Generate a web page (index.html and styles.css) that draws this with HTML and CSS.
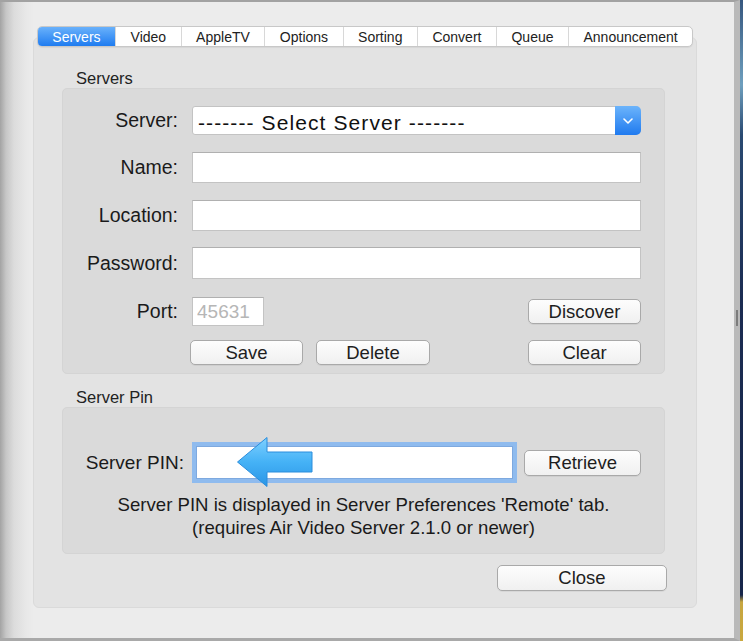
FILE: index.html
```html
<!DOCTYPE html>
<html lang="en">
<head>
  <meta charset="UTF-8" />
  <title>Air Video - Preferences</title>
  <link rel="stylesheet" href="styles.css">
</head>
<body>

  <div class="window">
    <div class="tabview">
      <div class="tabs">
        <span class="tab active">Servers</span>
        <span class="tab">Video</span>
        <span class="tab">AppleTV</span>
        <span class="tab">Options</span>
        <span class="tab">Sorting</span>
        <span class="tab">Convert</span>
        <span class="tab">Queue</span>
        <span class="tab">Announcement</span>
      </div>

      <div class="tabbox">
        <div class="section-title">Servers</div>
        <div class="group servers">
          <div class="row row-select">
            <label>Server:</label>
            <div class="select">
              <span class="select-value">------- Select Server -------</span>
              <span class="select-btn">
                <svg width="10" height="6" viewBox="0 0 10 6"><path d="M1 1 L5 5 L9 1" fill="none" stroke="#fff" stroke-width="1.6" stroke-linecap="round" stroke-linejoin="round"/></svg>
              </span>
            </div>
          </div>
          <div class="row row-name">
            <label>Name:</label>
            <input class="field" type="text">
          </div>
          <div class="row row-location">
            <label>Location:</label>
            <input class="field" type="text">
          </div>
          <div class="row row-password">
            <label>Password:</label>
            <input class="field" type="password">
          </div>
          <div class="row row-port">
            <label>Port:</label>
            <input class="field port" type="text" placeholder="45631">
            <button class="btn push-right">Discover</button>
          </div>
          <div class="row row-actions">
            <button class="btn">Save</button>
            <button class="btn delete">Delete</button>
            <button class="btn push-right">Clear</button>
          </div>
        </div>

        <div class="section-title pin-title">Server Pin</div>
        <div class="group pin">
          <div class="row row-pin">
            <label>Server PIN:</label>
            <div class="pin-field">
              <input class="field focused" type="text">
              <!-- pointer arrow over the PIN box -->
              <svg class="arrow" width="78" height="52" viewBox="0 0 78 52">
                <defs>
                  <linearGradient id="arrowFill" x1="0" y1="0" x2="0" y2="1">
                    <stop offset="0" stop-color="#7fd0ff"/>
                    <stop offset="0.5" stop-color="#45b2f6"/>
                    <stop offset="1" stop-color="#2a95e6"/>
                  </linearGradient>
                </defs>
                <path d="M1.5 26 L31 1.5 L31 16 L76 16 L76 36 L31 36 L31 50.5 Z" fill="url(#arrowFill)" stroke="#2b8ddc" stroke-width="1" stroke-linejoin="round"/>
              </svg>
            </div>
            <button class="btn retrieve">Retrieve</button>
          </div>
          <p class="hint">Server PIN is displayed in Server Preferences 'Remote' tab.<br>(requires Air Video Server 2.1.0 or newer)</p>
        </div>

        <div class="footer">
          <button class="btn close">Close</button>
        </div>
      </div>
    </div>
  </div>

</body>
</html>
```

FILE: styles.css
```css
body {
  margin: 0;
  font-family: "Liberation Sans", Arial, sans-serif;
  color: #1a1a1a;
  background: linear-gradient(to bottom, #36577f 0, #6e9fbe 85px, #2a4a72 135px, #1b2c52 300px, #17264a 595px, #c7a640 602px, #c9a83f 641px);
  height: 641px;
  overflow: hidden;
}

/* Preferences window */
.window {
  position: relative;
  width: 740px;
  height: 641px;
  box-sizing: border-box;
  padding: 24px 0 0 33px;
  border-top: 2px solid #a2a2a2;
  border-right: 6px solid #b9b9b9;
  border-bottom: 3px solid #a9a9a9;
  background: linear-gradient(to right, #a3a3a3 0, #c6c6c6 6px, #dcdcdc 14px, #e8e8e8 26px, #ececec 34px);
}
.window::after {
  content: "";
  position: absolute;
  right: -4px;
  top: 308px;
  width: 2px;
  height: 16px;
  background: #7c7c7c;
}

.tabview {
  width: 664px;
}

/* Segmented tab control */
.tabs {
  position: relative;
  z-index: 1;
  display: flex;
  width: fit-content;
  height: 21px;
  box-sizing: border-box;
  margin: 0 auto -10px;
  background: #fff;
  border: 1px solid #c8c8c8;
  border-radius: 5px;
  overflow: hidden;
  box-shadow: 0 1px 1px rgba(0,0,0,0.06);
}
.tab {
  padding: 0 14.5px;
  line-height: 20px;
  font-size: 14px;
  color: #222;
  border-left: 1px solid #d8d8d8;
}
.tab:first-child { border-left: none; }
.tab.active {
  color: #fff;
  background: linear-gradient(to bottom, #69b1fb, #1f7cf0);
}

.tabbox {
  background: #e3e3e3;
  border: 1px solid #dadada;
  border-radius: 6px;
  padding: 30px 31px 16px 28px;
}

.section-title {
  font-size: 16.5px;
  line-height: 20px;
  padding-left: 14px;
  color: #222;
}
.pin-title { margin-top: 13px; }

.group {
  background: #dadada;
  border: 1px solid #d4d4d4;
  border-radius: 5px;
}
.servers { padding: 17px 23px 8px 0; }
.pin { padding: 34px 23px 14px 0; }

.row {
  display: flex;
  align-items: center;
}
.row label {
  width: 115px;
  margin-right: 14px;
  text-align: right;
  font-size: 19.5px;
  color: #1a1a1a;
  white-space: nowrap;
}
.row-select { height: 29px; margin-bottom: 17px; }
.row-name { height: 31px; margin-bottom: 17px; }
.row-location { height: 31px; margin-bottom: 16px; }
.row-password { height: 32px; margin-bottom: 18px; }
.row-port { height: 29px; margin-bottom: 14px; }
.row-actions { height: 25px; padding-left: 127px; }
.row-pin { height: 41px; }
.row-pin label { width: 121px; margin-right: 12px; font-size: 19px; }

.field {
  flex: 1;
  height: 100%;
  box-sizing: border-box;
  margin: 0;
  padding: 0 4px;
  background: #fff;
  border: 1px solid #c3c3c3;
  border-top-color: #b0b0b0;
  border-radius: 0;
  font-family: inherit;
  font-size: 19px;
  outline: none;
}
.field.port {
  flex: none;
  width: 72px;
}
.field.port::placeholder { color: #b6b6b6; }

/* popup button */
.select {
  flex: 1;
  height: 100%;
  display: flex;
  align-items: center;
  box-sizing: border-box;
  background: #fff;
  border: 1px solid #c3c3c3;
  border-radius: 3px 5px 5px 3px;
}
.select-value {
  padding: 4px 0 0 5px;
  font-size: 21px;
  letter-spacing: 1.1px;
  color: #111;
}
.select-btn {
  margin-left: auto;
  margin-right: -1px;
  width: 26px;
  height: 29px;
  display: flex;
  align-items: center;
  justify-content: center;
  background: linear-gradient(to bottom, #6cb4fb, #1f7aef);
  border-radius: 0 5px 5px 0;
}

.btn {
  height: 25px;
  width: 113px;
  box-sizing: border-box;
  padding: 0;
  background: linear-gradient(to bottom, #fdfdfd, #f0f0f0);
  border: 1px solid #a9a9a9;
  border-radius: 5px;
  font-family: inherit;
  font-size: 18.5px;
  line-height: 22px;
  color: #1e1e1e;
  box-shadow: 0 1px 0 rgba(0,0,0,0.05);
}
.push-right { margin-left: auto; }
.delete { margin-left: 13px; width: 114px; }

.pin-field {
  position: relative;
  width: 317px;
  height: 33px;
}
.field.focused {
  width: 100%;
  box-shadow: 0 0 0 4px #8fbbee;
  border-color: #7ea9df;
}
.arrow {
  position: absolute;
  left: 40px;
  top: -10px;
}
.retrieve {
  margin-left: 11px;
  width: 117px;
  height: 26px;
}

/* centred across the whole group, not just the padded area */
.hint {
  margin: 10px -23px 0 0;
  text-align: center;
  font-size: 18.6px;
  line-height: 23px;
  color: #1a1a1a;
}

.footer {
  display: flex;
  justify-content: flex-end;
  margin-top: 11px;
}
.close {
  width: 170px;
  height: 26px;
  margin-right: -2px;
}
```
